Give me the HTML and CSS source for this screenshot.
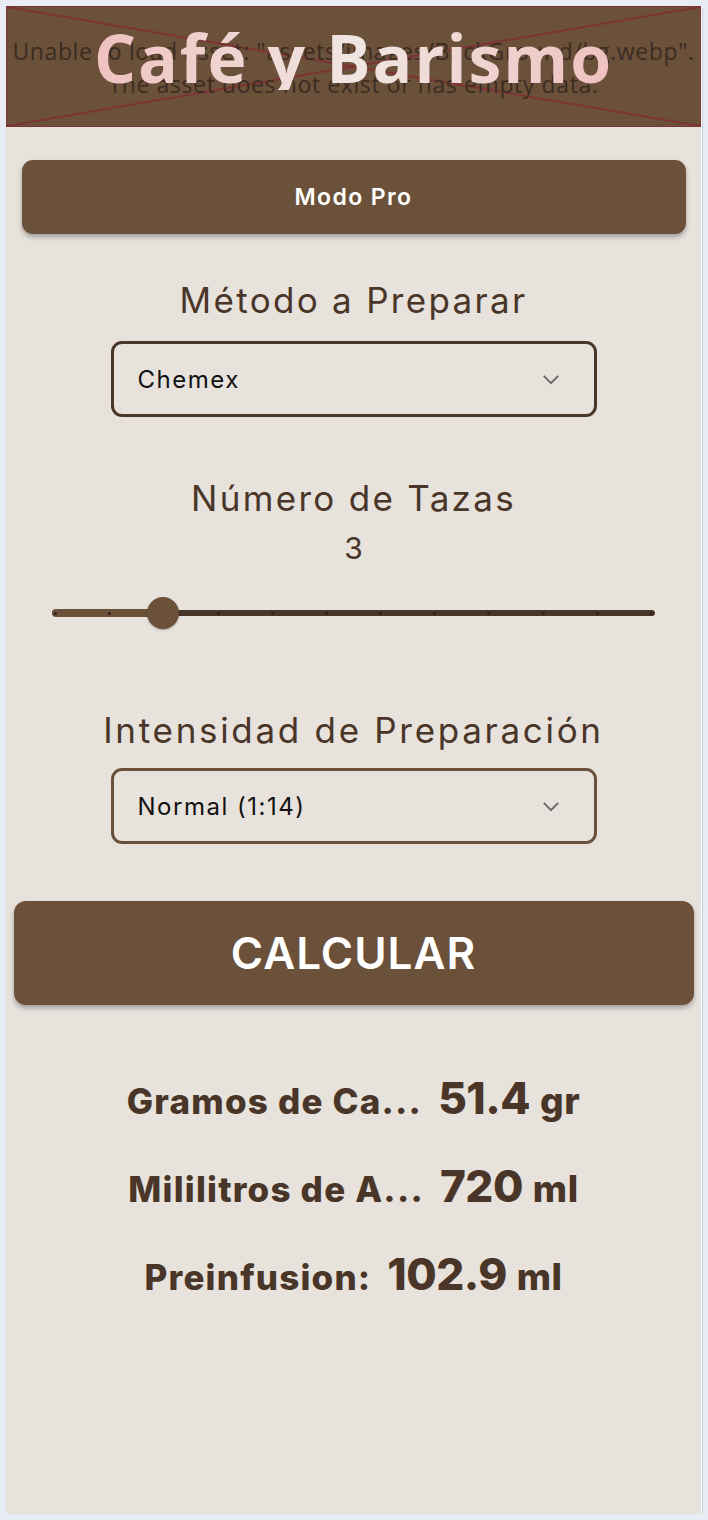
FILE: index.html
```html
<!DOCTYPE html>
<html lang="es">
<head>
<meta charset="utf-8">
<title>Café y Barismo</title>
<link rel="stylesheet" href="styles.css">
</head>
<body>
<div class="app">
  <header class="hero">
    <svg class="hero-x" viewBox="0 0 694 119" preserveAspectRatio="none">
      <line x1="0" y1="0" x2="694" y2="119" stroke="#7e3434" stroke-width="2"/>
      <line x1="694" y1="0" x2="0" y2="119" stroke="#7e3434" stroke-width="2"/>
    </svg>
    <p class="hero-error">Unable to load asset: "assets/images/BackGround/bg.webp".<br>The asset does not exist or has empty data.</p>
    <h1 class="hero-title">Café y Barismo</h1>
  </header>

  <main class="content">
    <button class="pro-btn">Modo Pro</button>

    <h2 class="label label-method">Método a Preparar</h2>
    <div class="select select-dark">
      <span>Chemex</span>
      <svg class="chev" viewBox="0 0 20 12"><path d="M2 2 L10 10 L18 2" fill="none" stroke="#6a6a6a" stroke-width="2.2"/></svg>
    </div>

    <h2 class="label label-cups">Número de Tazas</h2>
    <div class="cups-value">3</div>

    <div class="slider">
      <div class="track">
        <div class="track-active"></div>
        <div class="ticks">
          <i></i><i></i><i></i><i></i><i></i><i></i><i></i><i></i><i></i><i></i><i></i><i></i>
        </div>
        <div class="thumb"></div>
      </div>
    </div>

    <h2 class="label label-intensity">Intensidad de Preparación</h2>
    <div class="select select-light">
      <span>Normal (1:14)</span>
      <svg class="chev" viewBox="0 0 20 12"><path d="M2 2 L10 10 L18 2" fill="none" stroke="#6a6a6a" stroke-width="2.2"/></svg>
    </div>

    <button class="calc-btn">CALCULAR</button>

    <section class="results">
      <div class="result"><span class="r-label">Gramos de Ca...</span><span class="r-num">51.4</span><span class="r-unit">gr</span></div>
      <div class="result"><span class="r-label">Mililitros de A...</span><span class="r-num">720</span><span class="r-unit">ml</span></div>
      <div class="result"><span class="r-label">Preinfusion:</span><span class="r-num">102.9</span><span class="r-unit">ml</span></div>
    </section>
  </main>
</div>
</body>
</html>
```

FILE: styles.css
```css
* { box-sizing: border-box; }
html, body { margin: 0; padding: 0; }
body {
  background: #e8ecf4;
  font-family: Inter, "Noto Sans", sans-serif;
  color: #4a3628;
}
.app {
  margin: 6px 0 0 6px;
  width: 695px;
  height: 1508px;
  background: #e7e2dc;
  box-shadow: 1px 1px 0 #ffffff, 2px 2px 1px #cfd3dc;
  display: flex;
  flex-direction: column;
}
.hero {
  height: 121px;
  background: #6b503a;
  border: 1px solid #7e3434;
  display: grid;
  place-items: center;
  position: relative;
  overflow: hidden;
}
.hero > * { grid-area: 1 / 1; }
.hero-x {
  width: 100%;
  height: 100%;
}
.hero-error {
  margin: 0;
  text-align: center;
  font-family: "Open Sans", sans-serif;
  font-size: 23px;
  line-height: 33px;
  color: #3b2c21;
  letter-spacing: 0.6px;
  white-space: nowrap;
  position: relative;
  top: 1px;
}
.hero-title {
  margin: 0;
  font-family: "Open Sans", sans-serif;
  font-weight: 700;
  font-size: 66px;
  letter-spacing: 2px;
  line-height: 1;
  background: linear-gradient(90deg, #efc1c0 0%, #efe6e2 50%, #efc1c0 100%);
  -webkit-background-clip: text;
  background-clip: text;
  color: transparent;
  position: relative;
  top: -10px;
}
.content {
  display: flex;
  flex-direction: column;
  align-items: center;
}
.pro-btn {
  margin-top: 33px;
  width: 664px;
  height: 74px;
  border: none;
  border-radius: 11px;
  background: #6b503a;
  color: #ffffff;
  font-family: Inter, sans-serif;
  font-weight: 600;
  font-size: 23px;
  letter-spacing: 1.4px;
  box-shadow: 0 3px 5px rgba(0,0,0,0.3);
}
.label {
  margin: 0;
  font-weight: 400;
  font-size: 35px;
  line-height: 44px;
  text-align: center;
  color: #4a3628;
  letter-spacing: 2.3px;
  white-space: nowrap;
}
.label-method { margin-top: 44px; }
.select {
  margin-top: 19px;
  width: 486px;
  height: 76px;
  border-radius: 11px;
  border: 3px solid #4a3628;
  display: flex;
  align-items: center;
  justify-content: space-between;
  padding: 0 34px 0 24px;
  font-size: 24px;
  color: #111111;
  letter-spacing: 1.5px;
}
.select-light { border-color: #6b503a; }
.chev { width: 18px; height: 11px; }
.label-cups { margin-top: 59px; }
.cups-value {
  font-size: 30px;
  line-height: 40px;
  margin-top: 8px;
  color: #4a3628;
}
.slider {
  margin-top: 29px;
  width: 603px;
  height: 32px;
  display: flex;
  align-items: center;
}
.track {
  position: relative;
  width: 100%;
  height: 6px;
  background: #4a3628;
  border-radius: 3px;
}
.track-active {
  position: absolute;
  left: 0;
  top: -1px;
  width: 111px;
  height: 8px;
  border-radius: 4px;
  background: #6b503a;
}
.ticks {
  position: absolute;
  left: 2px;
  right: 2px;
  top: 1.5px;
  display: flex;
  justify-content: space-between;
}
.ticks i {
  display: block;
  width: 3px;
  height: 3px;
  border-radius: 50%;
  background: #2b1e15;
}
.thumb {
  position: absolute;
  left: 95px;
  top: -13px;
  width: 32px;
  height: 32px;
  border-radius: 50%;
  background: #6b503a;
  box-shadow: 0 1px 2px rgba(0,0,0,0.3);
}
.label-intensity { margin-top: 79px; letter-spacing: 2.7px; }
.select-light { margin-top: 16px; }
.calc-btn {
  margin-top: 57px;
  width: 680px;
  height: 104px;
  border: none;
  border-radius: 12px;
  background: #6b503a;
  color: #ffffff;
  font-family: Inter, sans-serif;
  font-weight: 600;
  font-size: 44px;
  letter-spacing: 1px;
  box-shadow: 0 3px 5px rgba(0,0,0,0.3);
}
.results {
  margin-top: 66px;
  display: flex;
  flex-direction: column;
  align-items: center;
  gap: 44px;
}
.result {
  display: flex;
  align-items: baseline;
  height: 44px;
  color: #4a3628;
  font-weight: 800;
  white-space: nowrap;
}
.r-label { font-size: 35px; margin-right: 16px; letter-spacing: 1.2px; }
.r-num { font-size: 44px; margin-right: 10px; letter-spacing: -0.5px; }
.r-unit { font-size: 37px; letter-spacing: 0.5px; }
```
